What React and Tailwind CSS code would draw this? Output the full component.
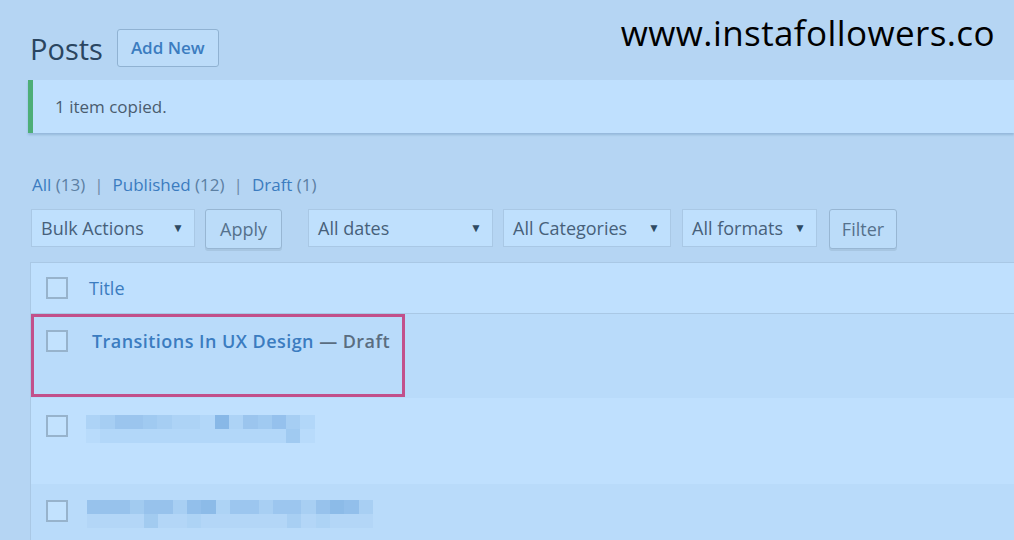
import React from 'react';

const font = { fontFamily: '"Open Sans", "Noto Sans", sans-serif' };

// pixel blocks standing in for the blurred post titles
const blurTop2 = [3, 4, 6, 6, 5, 4, 3, 3, 2, 9, 3, 6, 5, 7, 4, 2];
const blurBot2 = [1, 2, 2, 2, 2, 2, 2, 2, 2, 2, 2, 2, 2, 2, 5, 1];
const blurTop3 = [6, 6, 6, 4, 6, 6, 3, 7, 8, 2, 5, 5, 3, 5, 5, 3, 6, 8, 7, 3];
const blurBot3 = [1, 1, 1, 1, 4, 1, 1, 2, 1, 1, 1, 1, 1, 1, 3, 1, 2, 1, 1, 1];

function Blocks({ top, bottom }) {
  return (
    <div className="flex flex-col">
      {[top, bottom].map((line, i) => (
        <div key={i} className="flex h-[14px]">
          {line.map((a, j) => (
            <div key={j} className="w-[14.3px] h-full" style={{ backgroundColor: `rgba(110,165,220,${a * 0.075})` }} />
          ))}
        </div>
      ))}
    </div>
  );
}

function Checkbox() {
  return <div className="w-[22px] h-[22px] shrink-0 border-2 border-[#97b3cc] bg-[#c2e2fe]" />;
}

function Select({ label, width }) {
  return (
    <div className={`flex items-center justify-between h-[38px] ${width} pl-[9px] pr-[10px] border border-[#a9c8e5] bg-[#bfe0fd] text-[18px] leading-[22px] text-[#47607a]`}>
      <span>{label}</span>
      <span className="text-[12px] text-[#2f4a63]">▼</span>
    </div>
  );
}

function Button({ label, width }) {
  return (
    <div className={`flex items-center justify-center h-[40px] ${width} rounded-[3px] border border-[#97b6d3] bg-[#bbdcf9] shadow-[0_2px_0_#a7c6e2] text-[18px] leading-[22px] text-[#55718c]`}>
      {label}
    </div>
  );
}

export default function App() {
  return (
    <div className="relative w-[1014px] h-[540px] overflow-hidden bg-[#b5d5f3]" style={font}>
      <div className="absolute right-[19px] top-[7px] text-[35px] text-black tracking-[0.4px]" style={{ fontFamily: '"Open Sans", sans-serif' }}>
        www.instafollowers.co
      </div>

      <div className="pt-[29px]">
        <div className="flex items-center gap-[14px] pl-[30px]">
          <h1 className="text-[29px] leading-[37px] text-[#2a4560]">Posts</h1>
          <div className="h-[38px] px-[13px] flex items-center rounded-[3px] border border-[#90b2d2] bg-[#bcdcf9] text-[17px] font-semibold text-[#3b7cc0]">
            Add New
          </div>
        </div>

        <div className="mt-[13px] ml-[28px] h-[53px] flex items-center pl-[22px] border-l-[5px] border-[#4dae77] bg-[#bfe0fe] shadow-[0_2px_2px_rgba(110,150,190,0.45)] text-[17px] text-[#4a5c6e]">
          1 item copied.
        </div>

        <div className="mt-[41px] pl-[32px] flex items-center text-[17px] leading-[22px] text-[#3b7cc0]">
          <span>All <span className="text-[#5c7fa3]">(13)</span></span>
          <span className="mx-[9px] text-[#6d8aa6]">|</span>
          <span>Published <span className="text-[#5c7fa3]">(12)</span></span>
          <span className="mx-[9px] text-[#6d8aa6]">|</span>
          <span>Draft <span className="text-[#5c7fa3]">(1)</span></span>
        </div>

        <div className="mt-[13px] pl-[31px] flex items-start">
          <Select label="Bulk Actions" width="w-[164px]" />
          <div className="ml-[10px]"><Button label="Apply" width="w-[77px]" /></div>
          <div className="ml-[26px]"><Select label="All dates" width="w-[185px]" /></div>
          <div className="ml-[10px]"><Select label="All Categories" width="w-[168px]" /></div>
          <div className="ml-[11px]"><Select label="All formats" width="w-[135px]" /></div>
          <div className="ml-[12px]"><Button label="Filter" width="w-[68px]" /></div>
        </div>

        <div className="mt-[13px] ml-[30px] border-l border-t border-[#a9c8e5]">
          <div className="h-[51px] flex items-center gap-[21px] pl-[15px] bg-[#bfe0fe] border-b border-[#a9c8e5] text-[18px] text-[#3b7cc0]">
            <Checkbox />
            <span>Title</span>
          </div>

          <div className="relative h-[84px] flex items-start gap-[24px] pl-[15px] pt-[16px] bg-[#b9dbfa]">
            <Checkbox />
            <span className="text-[18px] font-semibold leading-[22px] tracking-[0.45px] text-[#3b7cc0]">
              Transitions In UX Design <span className="text-[#5a6d80]">— Draft</span>
            </span>
            <div className="absolute left-0 top-0 w-[374px] h-[83px] border-[3px] border-[#c2508b]" />
          </div>

          <div className="h-[86px] flex items-start gap-[18px] pl-[15px] pt-[17px] bg-[#bfe0fe]">
            <Checkbox />
            <Blocks top={blurTop2} bottom={blurBot2} />
          </div>

          <div className="h-[60px] flex items-start gap-[19px] pl-[15px] pt-[16px] bg-[#b9dbfa]">
            <Checkbox />
            <Blocks top={blurTop3} bottom={blurBot3} />
          </div>
        </div>
      </div>
    </div>
  );
}
